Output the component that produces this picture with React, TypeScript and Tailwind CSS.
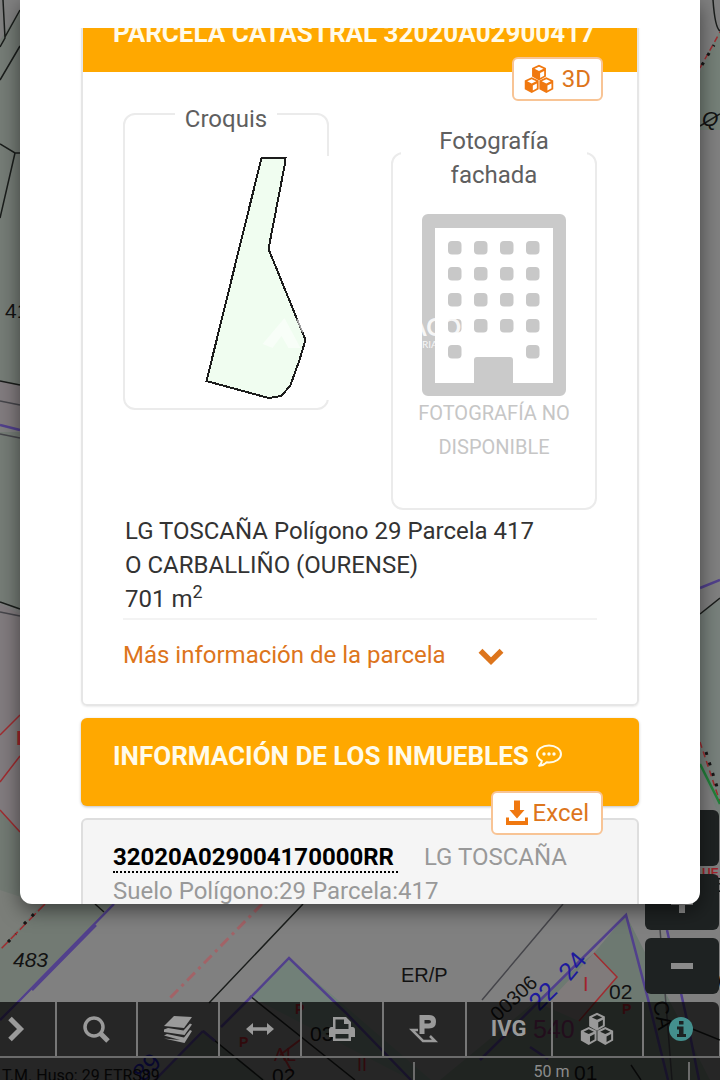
import type { ReactNode } from "react";

type IconProps = { className?: string };

function CubesIcon({ className }: IconProps) {
  const cube = (x: number, y: number) =>
    `M${x} ${y - 8.4}L${x + 7.4} ${y - 5}V${y + 4.2}L${x} ${y + 8.4}L${x - 7.4} ${y + 4.2}V${y - 5}Z` +
    `M${x} ${y - 6.4}L${x + 4.8} ${y - 4.1}L${x} ${y - 1.8}L${x - 4.8} ${y - 4.1}Z` +
    `M${x + 1.2} ${y + 0.4}L${x + 5.5} ${y - 1.8}V${y + 3.2}L${x + 1.2} ${y + 5.6}Z`;
  return (
    <svg viewBox="0 0 32 32" className={className} fill="currentColor" fillRule="evenodd" aria-hidden="true">
      <path d={cube(16, 9.2)} />
      <path d={cube(8.2, 22.6)} />
      <path d={cube(23.8, 22.6)} />
    </svg>
  );
}

function DownloadIcon({ className }: IconProps) {
  return (
    <svg viewBox="0 0 24 26" className={className} fill="currentColor" aria-hidden="true">
      <path d="M9 0.5h6V10h4.5L12 18.5 4.5 10H9z" />
      <path d="M1 17.5h3V21h16v-3.5h3V25H1z" />
    </svg>
  );
}

function SpeechIcon({ className }: IconProps) {
  return (
    <svg viewBox="0 0 28 26" className={className} fill="none" stroke="currentColor" strokeWidth="2" aria-hidden="true">
      <path d="M14 2.5C7.300 2.500 2 6.200 2 11c0 2.800 1.900 5.200 4.800 6.800-.3 2-1.300 3.700-2.600 5 3-.4 5.700-1.700 7.500-3.600.8.1 1.500.2 2.300.2 6.700 0 12-3.700 12-8.400S20.700 2.500 14 2.500z" strokeLinejoin="round" />
      <g fill="currentColor" stroke="none">
        <circle cx="9" cy="11" r="1.700" />
        <circle cx="14" cy="11" r="1.700" />
        <circle cx="19" cy="11" r="1.700" />
      </g>
    </svg>
  );
}

function ChevronIcon({ className }: IconProps) {
  return (
    <svg viewBox="0 0 26 18" className={className} fill="none" stroke="currentColor" strokeWidth="5.500" aria-hidden="true">
      <path d="M2.500 2.800L13 13.200 23.500 2.800" />
    </svg>
  );
}

function BuildingIcon({ className }: IconProps) {
  const cols = [26, 52, 78, 104];
  const rows = [27, 53, 79, 105];
  return (
    <svg viewBox="0 0 144 182" className={className} aria-hidden="true">
      <path
        fill="#cacaca"
        fillRule="evenodd"
        d="M6 0h132a6 6 0 0 1 6 6v170a6 6 0 0 1-6 6H6a6 6 0 0 1-6-6V6a6 6 0 0 1 6-6zM13 14v155h39v-23q0-3 3-3h33q3 0 3 3v23h40V14z"
      />
      <g fill="#c8c8c8">
        {rows.map((y) => cols.map((x) => <rect key={`${x}-${y}`} x={x} y={y} width="13.500" height="13.500" rx="4" />))}
        <rect x="26" y="131" width="13.500" height="13.500" rx="4" />
        <rect x="104" y="131" width="13.500" height="13.500" rx="4" />
      </g>
      <g fill="#ffffff" fillOpacity="0.850" fontFamily="Lato, sans-serif">
        <text x="-12" y="122" fontSize="24" fontWeight="700">ACO</text>
        <text x="0" y="134" fontSize="10">RIA</text>
      </g>
    </svg>
  );
}

function ParcelSketch({ className }: IconProps) {
  return (
    <svg viewBox="133 156 197 244" className={className} role="img" aria-label="Croquis de la parcela">
      <polygon
        points="261,158 285,158 284,166 268,249 305,340 299,360 290,385 281,396 268,398 206,381"
        fill="#f0fdf0"
        stroke="#1c1c1c"
        strokeWidth="2"
        shapeRendering="crispEdges"
      />
      <path d="M262 344l22-26 16 30h-12l-7-12-9 12z" fill="#ffffff" fillOpacity="0.500" />
      <path d="M297 319l6 13" stroke="#ffffff" strokeOpacity="0.600" strokeWidth="3" />
    </svg>
  );
}

function CadastralMap() {
  return (
    <svg
      viewBox="0 0 720 1080"
      preserveAspectRatio="xMidYMid slice"
      className="absolute inset-0 h-full w-full"
      fill="none"
      strokeWidth="1.500"
      aria-hidden="true"
    >
      <rect width="720" height="1080" fill="#808080" />
      <g stroke="none">
        <path d="M0 40L20 10V385L0 381z" fill="#757c76" />
        <path d="M0 432h20v178L0 602z" fill="#757c76" />
        <path d="M0 381l20 4v45L0 425zM0 604l20 10v225L0 810z" fill="#817b7e" />
        <path d="M0 810L45 860 114 904 0 1018z" fill="#727a73" />
        <path d="M0 890L42 904 0 948z" fill="#7b7e79" />
        <path d="M720 30v100h-20V72z" fill="#758078" />
        <path d="M720 600v220l-20-55V614z" fill="#78817c" />
        <path d="M289 958L251 997l160 83h20z" fill="#718078" />
        <path d="M203 1031l-48 49h110z" fill="#6b756f" />
        <path d="M626 915L594 953 440 1080h270z" fill="#6d7971" />
        <path d="M594 953l23 24-38 44-34-15z" fill="#807b7b" />
      </g>
      <g stroke="#1a1d1b">
        <path d="M3 0l2 38L0 47M20 10L5 37M20 46L0 80M0 144l15 9h5M15 153L0 218M0 381l20 4M0 602l20 7" />
        <path d="M303 904L209 1003M250 996l105 84M203 1031l60 49" />
        <path d="M720 598l-20 16M713 0q2 28 7 31M700 126l20-12M631 1065l10 15M690 1028l30 12" />
        <path d="M95 904l9 8" />
      </g>
      <g stroke="#45454a">
        <path d="M0 401l20 4M0 434l20 4M0 612l20 4M563 904L482 1000M658 904l14 176" />
      </g>
      <g stroke="#51408c" strokeWidth="2.500">
        <path d="M0 425l20 5M114 904L20 1000 0 1020M96 925L32 990M720 580l-20 8" />
        <path d="M251 997l38-39 57 55 65 67M203 1031l-48 49M203 1031l12 10M251 997l-30 30" />
        <path d="M480 1060L626 915l22 84 20 81M667 930l20 90 12 60M530 1047l18 12" />
      </g>
      <g stroke="#a02c30">
        <path d="M0 735l20-20M0 782l20-26M0 810l20 22M594 953l23 24-38 44" />
        <path d="M700 742l20 60M700 68l20-36" strokeDasharray="6 4" />
        <path d="M45 904L0 950" strokeDasharray="10 3" />
        <path d="M262 904L170 998" stroke="#a26367" strokeWidth="3" strokeDasharray="11 5 3 5" />
        <path d="M280 1050l12 22M300 1040l-20 15" strokeWidth="2" />
      </g>
      <path d="M700 764l20 40" stroke="#22813a" strokeWidth="2.500" />
      <path d="M24 924l10-10M8 942l8-8M706 752l12 38M702 65l12-20" stroke="#171717" strokeWidth="3" strokeDasharray="3 8" />
      <g stroke="none" fill="#121212" fontFamily="'Liberation Sans', sans-serif" fontSize="21">
        <text x="5" y="318">41</text>
        <text x="702" y="126" fontStyle="italic">Q</text>
        <text x="13" y="967" fontStyle="italic">483</text>
        <text x="401" y="982" fontSize="20">ER/P</text>
        <text x="609" y="999">02</text>
        <text x="310" y="1041">03</text>
        <text x="272" y="1083">02</text>
        <text x="574" y="1080">01</text>
        <text x="0" y="0" transform="translate(498 1022) rotate(-43)" fontSize="20">00306</text>
        <text x="0" y="0" transform="translate(653 1002) rotate(80)">CA</text>
        <text x="708" y="990" fontWeight="700">M</text>
        <text x="703" y="892">05</text>
        <g fill="#1d1a9c">
          <text x="0" y="0" transform="translate(570 982) rotate(-50)" fontSize="25">24</text>
          <text x="0" y="0" transform="translate(539 1012) rotate(-45)" fontSize="25">22</text>
          <text x="0" y="0" transform="translate(143 1083) rotate(-45)" fontSize="25">89</text>
        </g>
        <g fill="#a2242c">
          <text x="583" y="991" fontSize="20">I</text>
          <text x="702" y="877" fontSize="12" fontWeight="700">UE</text>
          <text x="16" y="745" fontWeight="700">I</text>
          <text x="295" y="1014" fontSize="14" fontWeight="700">P</text>
          <text x="239" y="1047" fontSize="14" fontWeight="700">P</text>
          <text x="622" y="1014" fontSize="14" fontWeight="700">P</text>
          <text x="357" y="1071" fontSize="18">II</text>
          <text x="274" y="1061" fontSize="18">AL</text>
        </g>
        <text x="533" y="1038" fill="#73305f" fontSize="25">540</text>
      </g>
    </svg>
  );
}

const tools: { label: string; cell: string; icon: ReactNode }[] = [
  {
    label: "Desplegar",
    cell: "flex-[56]",
    icon: (
      <svg viewBox="0 0 20 26" className="mr-5 h-[26px] w-5" fill="none" stroke="currentColor" strokeWidth="5" aria-hidden="true">
        <path d="M3 2.500L13.500 13 3 23.500" />
      </svg>
    ),
  },
  {
    label: "Buscar",
    cell: "flex-[81]",
    icon: (
      <svg viewBox="0 0 28 28" className="size-7" fill="none" stroke="currentColor" strokeWidth="3.500" aria-hidden="true">
        <circle cx="12" cy="12" r="9" />
        <path d="M18.500 18.500L26 26" strokeWidth="5" />
      </svg>
    ),
  },
  {
    label: "Capas",
    cell: "flex-[82]",
    icon: (
      <svg viewBox="0 0 30 30" className="size-[30px]" fill="currentColor" aria-hidden="true">
        <path d="M11 2l18 1-8 11-20-2z" />
        <path d="M1 15.500l4-1.500 15.500 2.500L27 9.500l2 1L21.500 21 1 18zM1 21.500l3-1.500 17 3.500L27 16l2 1-7.500 12L1 24.500l16 1.500z" />
      </svg>
    ),
  },
  {
    label: "Medir",
    cell: "flex-[82]",
    icon: (
      <svg viewBox="0 0 28 14" className="h-[14px] w-7" fill="currentColor" aria-hidden="true">
        <path d="M0 7l7-6v4.200h14V1l7 6-7 6V8.800H7V13z" />
      </svg>
    ),
  },
  {
    label: "Imprimir",
    cell: "flex-[81]",
    icon: (
      <svg viewBox="0 0 28 26" className="h-[26px] w-7" fill="currentColor" fillRule="evenodd" aria-hidden="true">
        <path d="M5 1h13l5 5v5h1.500Q27 11 27 14v7h-4v4H5v-4H1v-7q0-3 2.500-3H5zM7.500 3.500V13h13V8H16V3.500zM7.500 18v4.500h13V18z" />
      </svg>
    ),
  },
  {
    label: "Parcela",
    cell: "flex-[83]",
    icon: (
      <svg viewBox="0 0 30 32" className="h-8 w-[30px]" fill="none" stroke="currentColor" aria-hidden="true">
        <path d="M13 21V4.500h7q4.500 0 4.500 4.200T20 13h-7" strokeWidth="5" />
        <path d="M9 17H3l11 11h12l-5-5" strokeWidth="2.500" />
      </svg>
    ),
  },
  { label: "IVG", cell: "flex-[86]", icon: <span className="text-[22px] leading-8 font-bold">IVG</span> },
  { label: "Ver en 3D", cell: "flex-[91]", icon: <CubesIcon className="h-[34px] w-[34px]" /> },
  {
    label: "Información",
    cell: "flex-[77] rounded-tr-md",
    icon: (
      <svg viewBox="0 0 24 24" className="size-6" aria-hidden="true">
        <circle cx="12" cy="12" r="12" fill="#438f8d" />
        <path d="M10 4h4.500v3.500H10zM8 9.500h6.500v7.500H17v3H8v-3h2v-4.500H8z" fill="#1c2323" />
      </svg>
    ),
  },
];

function ZoomButton({ label, children }: { label: string; children?: ReactNode }) {
  return (
    <button type="button" aria-label={label} className="flex h-14 w-[74px] items-center justify-center rounded-md bg-[#1e2222]">
      <svg viewBox="0 0 22 22" className="size-[22px]" stroke="#8b8b8b" strokeWidth="6" aria-hidden="true">
        {children}
      </svg>
    </button>
  );
}

function MapControls() {
  return (
    <div className="absolute inset-0 flex flex-col justify-end">
      <div className="mr-px mb-2 flex flex-col gap-2 self-end">
        <ZoomButton label="Ubicación" />
        <ZoomButton label="Acercar">
          <path d="M0 11H22M11 0V22" />
        </ZoomButton>
        <ZoomButton label="Alejar">
          <path d="M0 11H22" />
        </ZoomButton>
      </div>
      <nav aria-label="Herramientas" className="flex h-14 w-full border-b-2 border-[#6b6b6b] pr-px text-[#9a9a9a]">
        {tools.map((tool) => (
          <button
            key={tool.label}
            type="button"
            aria-label={tool.label}
            className={`flex min-w-0 items-center justify-center border-r-2 border-[#777777] bg-black/70 last:border-r-0 ${tool.cell}`}
          >
            {tool.icon}
          </button>
        ))}
      </nav>
      <footer className="flex h-[22px] w-full items-start bg-black/70 pr-[30px] text-base leading-6">
        <p className="flex-1 overflow-hidden pt-1.5 pl-0.5 whitespace-nowrap text-[#050505]">T.M. Huso: 29 ETRS89</p>
        <p className="mt-1 h-5 w-[277px] border-x-2 border-[#6b6b6b] text-center leading-5 text-[#8c8c8c]">50 m</p>
      </footer>
    </div>
  );
}

const floatingButton =
  "absolute flex items-center rounded-md border-2 border-[#f8c495] bg-white text-2xl leading-6 text-[#dd751c]";

export default function App() {
  return (
    <div className="relative h-screen overflow-hidden bg-[#808080] font-[Roboto,sans-serif]">
      <CadastralMap />
      <MapControls />

      <div className="absolute inset-0 px-5 pb-44">
        <main
          role="dialog"
          aria-label="Parcela catastral"
          className="h-full overflow-hidden rounded-b-xl bg-white pt-7 text-2xl leading-[34px] shadow-[0_6px_20px_rgba(0,0,0,0.5)]"
        >
          <div className="flex h-full flex-col gap-3 overflow-hidden px-[61px]">
            <section className="relative -mt-[34px] shrink-0 rounded-md border-2 border-[#e6e6e6] shadow-[0_1px_2px_rgba(0,0,0,0.08)]">
              <h2 className="h-[76px] bg-[#ffa800] px-[30px] pt-5 text-[26px] font-bold whitespace-nowrap text-[#fffbea]">
                PARCELA CATASTRAL 32020A02900417
              </h2>
              <button type="button" className={`${floatingButton} top-[61px] right-[34px] h-11 gap-2 px-2.5`}>
                <CubesIcon className="size-[30px] text-[#f07810]" />
                3D
              </button>

              <div className="px-10 pt-5 pb-8">
                <div className="grid grid-cols-2 items-start gap-x-[62px]">
                  <fieldset className="min-w-0 rounded-xl border-2 border-[#ebebeb] px-2 pb-2">
                    <legend className="mx-auto px-2.5 pt-2.5 text-[#5f5f5f]">Croquis</legend>
                    <div className="mt-5 -mr-3 bg-white">
                      <ParcelSketch className="block h-[244px] w-full" />
                    </div>
                  </fieldset>
                  <fieldset className="mt-[22px] min-w-0 rounded-xl border-2 border-[#ebebeb] px-2 pb-11 text-center">
                    <legend className="mx-auto px-2.5 pt-2.5 text-[#5f5f5f]">Fotografía fachada</legend>
                    <BuildingIcon className="mx-auto mt-[22px] block h-[182px] w-36 overflow-visible" />
                    <p className="px-4 text-xl leading-[34px] text-[#c6c6c6]">FOTOGRAFÍA NO DISPONIBLE</p>
                  </fieldset>
                </div>

                <div className="mt-1 border-b-2 border-[#f3f3f3] px-0.5 pb-0.5 text-[#333333]">
                  <p>LG TOSCAÑA Polígono 29 Parcela 417</p>
                  <p>O CARBALLIÑO (OURENSE)</p>
                  <p>
                    701 m<sup className="text-lg leading-none">2</sup>
                  </p>
                </div>

                <button type="button" className="mt-[18px] flex items-center gap-8 text-[#dd751c]">
                  Más información de la parcela
                  <ChevronIcon className="mt-1 h-[18px] w-[26px]" />
                </button>
              </div>
            </section>

            <section className="relative h-[88px] shrink-0 rounded-md bg-[#ffa800] px-8 pt-[21px] shadow-[0_1px_3px_rgba(0,0,0,0.25)]">
              <h2 className="flex items-center gap-1.5 text-[26px] font-bold whitespace-nowrap text-[#fffbea]">
                INFORMACIÓN DE LOS INMUEBLES
                <SpeechIcon className="h-[26px] w-7" />
              </h2>
              <button type="button" className={`${floatingButton} top-[73px] right-9 z-10 h-11 gap-1 px-3`}>
                <DownloadIcon className="h-[26px] w-6 text-[#f07810]" />
                Excel
              </button>
            </section>

            <section className="shrink-0 rounded-t-md border-2 border-[#dedede] bg-[#f5f5f5] px-[30px] pt-5 text-[#999999]">
              <p>
                <a href="#inmueble" className="mr-5 border-b-2 border-dotted border-black pr-1 font-bold text-black">
                  32020A029004170000RR
                </a>{" "}
                LG TOSCAÑA
              </p>
              <p>Suelo Polígono:29 Parcela:417</p>
            </section>
          </div>
        </main>
      </div>
    </div>
  );
}
